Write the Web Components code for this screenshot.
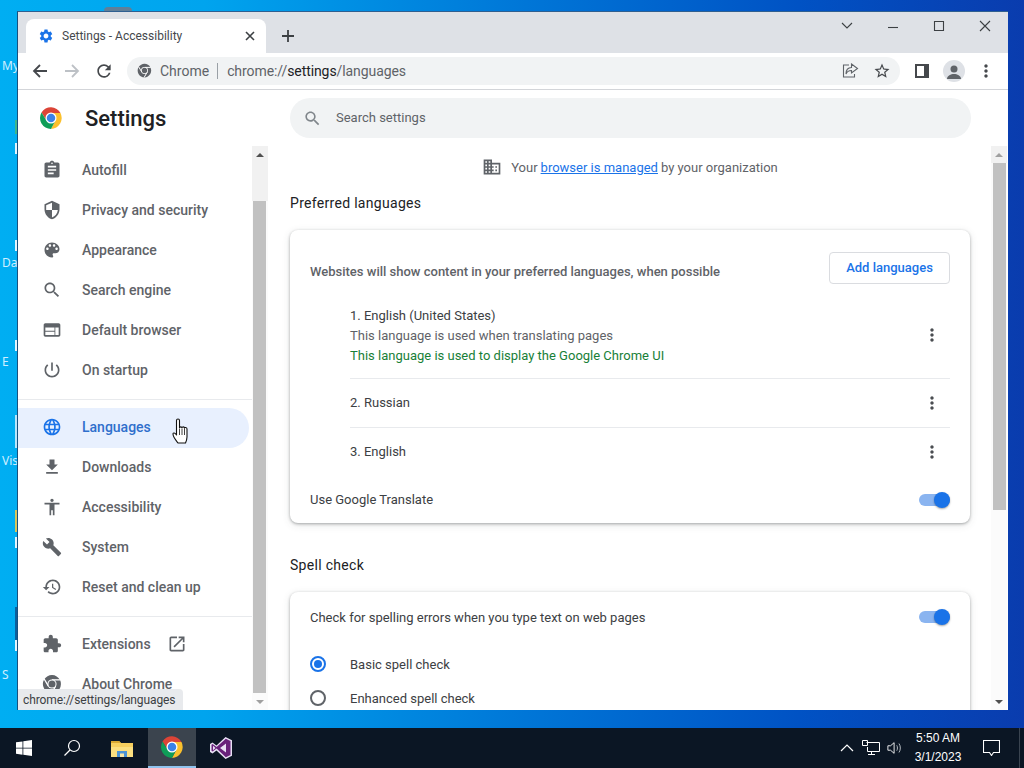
<!DOCTYPE html>
<html>
<head>
<meta charset="utf-8">
<title>Settings - Accessibility</title>
<style>
    html, body { margin: 0; height: 100%; overflow: hidden; }
    body { font-family: Roboto, "Liberation Sans", sans-serif; }
</style>
</head>
<body>
<win-desktop>
    <chrome-window>
        <tab-strip slot="top"></tab-strip>
        <tool-bar slot="top"></tool-bar>
        <settings-header slot="top"></settings-header>
        <settings-nav slot="side"></settings-nav>
        <settings-page slot="main"></settings-page>
    </chrome-window>
</win-desktop>

<script>
const ICONS = {
    assignment: 'M19 3h-4.18C14.4 1.84 13.3 1 12 1c-1.3 0-2.4.84-2.82 2H5c-1.1 0-2 .9-2 2v14c0 1.1.9 2 2 2h14c1.1 0 2-.9 2-2V5c0-1.1-.9-2-2-2zm-7 0c.55 0 1 .45 1 1s-.45 1-1 1-1-.45-1-1 .45-1 1-1zm2 14H7v-2h7v2zm3-4H7v-2h10v2zm0-4H7V7h10v2z',
    shield: 'M12 1L3 5v6c0 5.55 3.84 10.74 9 12 5.16-1.26 9-6.45 9-12V5l-9-4zm0 10.99h7c-.53 4.12-3.28 7.79-7 8.94V12H5V6.3l7-3.11v8.8z',
    palette: 'M12 3c-4.97 0-9 4.03-9 9s4.03 9 9 9c.83 0 1.5-.67 1.5-1.5 0-.39-.15-.74-.39-1.01-.23-.26-.38-.61-.38-.99 0-.83.67-1.5 1.5-1.5H16c2.76 0 5-2.24 5-5 0-4.42-4.03-8-9-8zm-5.5 9c-.83 0-1.5-.67-1.5-1.5S5.67 9 6.5 9 8 9.67 8 10.5 7.33 12 6.5 12zm3-4C8.67 8 8 7.33 8 6.5S8.67 5 9.5 5s1.5.67 1.5 1.5S10.33 8 9.5 8zm5 0c-.83 0-1.5-.67-1.5-1.5S13.67 5 14.5 5s1.5.67 1.5 1.5S15.33 8 14.5 8zm3 4c-.83 0-1.5-.67-1.5-1.5S16.67 9 17.5 9s1.5.67 1.5 1.5-.67 1.5-1.5 1.5z',
    search: 'M15.5 14h-.79l-.28-.27C15.41 12.59 16 11.11 16 9.5 16 5.91 13.09 3 9.5 3S3 5.91 3 9.5 5.91 16 9.5 16c1.61 0 3.09-.59 4.23-1.57l.27.28v.79l5 4.99L20.49 19l-4.99-5zm-6 0C7.01 14 5 11.99 5 9.5S7.01 5 9.5 5 14 7.01 14 9.5 11.99 14 9.5 14z',
    web: 'M20 4H4c-1.1 0-1.99.9-1.99 2L2 18c0 1.1.9 2 2 2h16c1.1 0 2-.9 2-2V6c0-1.1-.9-2-2-2zm-5 14H4v-4h11v4zm0-5H4V9h11v4zm5 5h-4V9h4v9z',
    power: 'M13 3h-2v10h2V3zm4.83 2.17l-1.42 1.42C17.99 7.86 19 9.81 19 12c0 3.87-3.13 7-7 7s-7-3.13-7-7c0-2.19 1.01-4.14 2.58-5.42L6.17 5.17C4.23 6.82 3 9.26 3 12c0 4.97 4.03 9 9 9s9-4.03 9-9c0-2.74-1.23-5.18-3.17-6.83z',
    language: 'M11.99 2C6.47 2 2 6.48 2 12s4.47 10 9.99 10C17.52 22 22 17.52 22 12S17.52 2 11.99 2zm6.93 6h-2.95c-.32-1.25-.78-2.45-1.38-3.56 1.84.63 3.37 1.91 4.33 3.56zM12 4.04c.83 1.2 1.48 2.53 1.91 3.96h-3.82c.43-1.43 1.08-2.76 1.91-3.96zM4.26 14C4.1 13.36 4 12.69 4 12s.1-1.36.26-2h3.38c-.08.66-.14 1.32-.14 2 0 .68.06 1.34.14 2H4.26zm.82 2h2.95c.32 1.25.78 2.45 1.38 3.56-1.84-.63-3.37-1.9-4.33-3.56zm2.95-8H5.08c.96-1.66 2.49-2.93 4.33-3.56C8.81 5.55 8.35 6.75 8.03 8zM12 19.96c-.83-1.2-1.48-2.53-1.91-3.96h3.82c-.43 1.43-1.08 2.76-1.91 3.96zM14.34 14H9.66c-.09-.66-.16-1.32-.16-2 0-.68.07-1.35.16-2h4.68c.09.65.16 1.32.16 2 0 .68-.07 1.34-.16 2zm.25 5.56c.6-1.11 1.06-2.31 1.38-3.56h2.95c-.96 1.65-2.49 2.93-4.33 3.56zM16.36 14c.08-.66.14-1.32.14-2 0-.68-.06-1.34-.14-2h3.38c.16.64.26 1.31.26 2s-.1 1.36-.26 2h-3.38z',
    download: 'M19 9h-4V3H9v6H5l7 7 7-7zM5 18v2h14v-2H5z',
    accessibility: 'M12 2c1.1 0 2 .9 2 2s-.9 2-2 2-2-.9-2-2 .9-2 2-2zm9 7h-6v13h-2v-6h-2v6H9V9H3V7h18v2z',
    build: 'M22.7 19l-9.1-9.1c.9-2.3.4-5-1.5-6.9-2-2-5-2.4-7.4-1.3L9 6 6 9 1.6 4.7C.4 7.1.9 10.1 2.9 12.1c1.9 1.9 4.6 2.4 6.9 1.5l9.1 9.1c.4.4 1 .4 1.4 0l2.3-2.3c.5-.4.5-1.1.1-1.4z',
    restore: 'M13 3c-4.97 0-9 4.03-9 9H1l3.89 3.89.07.14L9 12H6c0-3.87 3.13-7 7-7s7 3.13 7 7-3.13 7-7 7c-1.93 0-3.68-.79-4.94-2.06l-1.42 1.42C8.27 19.99 10.51 21 13 21c4.97 0 9-4.03 9-9s-4.03-9-9-9zm-1 5v5l4.28 2.54.72-1.21-3.5-2.08V8H12z',
    extension: 'M20.5 11H19V7c0-1.1-.9-2-2-2h-4V3.5C13 2.12 11.88 1 10.5 1S8 2.12 8 3.5V5H4c-1.1 0-1.99.9-1.99 2v3.8H3.5c1.49 0 2.7 1.21 2.7 2.7s-1.21 2.7-2.7 2.7H2V20c0 1.1.9 2 2 2h3.8v-1.5c0-1.49 1.21-2.7 2.7-2.7 1.49 0 2.7 1.21 2.7 2.7V22H17c1.1 0 2-.9 2-2v-4h1.5c1.38 0 2.5-1.12 2.5-2.5S21.88 11 20.5 11z',
    openNew: 'M19 19H5V5h7V3H5c-1.11 0-2 .9-2 2v14c0 1.1.89 2 2 2h14c1.1 0 2-.9 2-2v-7h-2v7zM14 3v2h3.59l-9.83 9.83 1.41 1.41L19 6.41V10h2V3h-7z',
    domain: 'M12 7V3H2v18h20V7H12zM6 19H4v-2h2v2zm0-4H4v-2h2v2zm0-4H4V9h2v2zm0-4H4V5h2v2zm4 12H8v-2h2v2zm0-4H8v-2h2v2zm0-4H8V9h2v2zm0-4H8V5h2v2zm10 12h-8v-2h2v-2h-2v-2h2v-2h-2V9h8v10zm-2-8h-2v2h2v-2zm0 4h-2v2h2v-2z',
    gear: 'M19.14 12.94c.04-.3.06-.61.06-.94 0-.32-.02-.64-.07-.94l2.03-1.58c.18-.14.23-.41.12-.61l-1.92-3.32c-.12-.22-.37-.29-.59-.22l-2.39.96c-.5-.38-1.03-.7-1.62-.94l-.36-2.54c-.04-.24-.24-.41-.48-.41h-3.84c-.24 0-.43.17-.47.41l-.36 2.54c-.59.24-1.13.57-1.62.94l-2.39-.96c-.22-.08-.47 0-.59.22L2.74 8.87c-.12.21-.08.47.12.61l2.03 1.58c-.05.3-.09.63-.09.94s.02.64.07.94l-2.03 1.58c-.18.14-.23.41-.12.61l1.92 3.32c.12.22.37.29.59.22l2.39-.96c.5.38 1.03.7 1.62.94l.36 2.54c.05.24.24.41.48.41h3.84c.24 0 .44-.17.47-.41l.36-2.54c.59-.24 1.13-.56 1.62-.94l2.39.96c.22.08.47 0 .59-.22l1.92-3.32c.12-.22.07-.47-.12-.61l-2.01-1.58zM12 15.6c-1.98 0-3.6-1.62-3.6-3.6s1.62-3.6 3.6-3.6 3.6 1.62 3.6 3.6-1.62 3.6-3.6 3.6z',
    dots: 'M12 8c1.1 0 2-.9 2-2s-.9-2-2-2-2 .9-2 2 .9 2 2 2zm0 2c-1.1 0-2 .9-2 2s.9 2 2 2 2-.9 2-2-.9-2-2-2zm0 6c-1.1 0-2 .9-2 2s.9 2 2 2 2-.9 2-2-.9-2-2-2z',
    reload: 'M17.65 6.35A7.958 7.958 0 0 0 12 4c-4.42 0-7.99 3.58-7.99 8s3.57 8 7.99 8c3.73 0 6.84-2.55 7.73-6h-2.08A5.99 5.99 0 0 1 12 18c-3.31 0-6-2.69-6-6s2.69-6 6-6c1.66 0 3.14.69 4.22 1.78L13 11h7V4l-2.35 2.35z',
    star: 'M22 9.24l-7.19-.62L12 2 9.19 8.63 2 9.24l5.46 4.73L5.82 21 12 17.27 18.18 21l-1.63-7.03L22 9.24zM12 15.4l-3.76 2.27 1-4.28-3.32-2.88 4.38-.38L12 6.1l1.71 4.04 4.38.38-3.32 2.88 1 4.28L12 15.4z'
};

function icon(name, size, color) {
    return `<svg width="${size}" height="${size}" viewBox="0 0 24 24" fill="${color}" style="display:block;flex:none"><path d="${ICONS[name]}"/></svg>`;
}

function chromeLogo(size, mono) {
    const cuts = mono
        ? '<path d="M24 14H44M15.300 29L5 11.500M32.700 29L22.500 46.500" stroke="#fff" stroke-width="3"/>'
        : '';
    return `<svg width="${size}" height="${size}" viewBox="0 0 48 48" style="display:block;flex:none">
        <path fill="${mono ? '#5f6368' : '#db4437'}" d="M5 13A22 22 0 0 1 43 14H24L15 29Z"/>
        <path fill="${mono ? '#5f6368' : '#fbc02d'}" d="M43 14A22 22 0 0 1 24 46L33 29L24 14Z"/>
        <path fill="${mono ? '#5f6368' : '#0f9d58'}" d="M24 46A22 22 0 0 1 5 13L15 29H33Z"/>
        ${cuts}
        <circle cx="24" cy="24" r="11" fill="#fff"/>
        <circle cx="24" cy="24" r="8.500" fill="${mono ? '#5f6368' : '#3b82e8'}"/>
    </svg>`;
}

class WinDesktop extends HTMLElement {
    constructor() {
        super();
        this.attachShadow({ mode: 'open' });
    }

    connectedCallback() {
        const labels = [['My', 59], ['Da', 256], ['E', 355], ['Vis', 454], ['S', 668]];
        const bits = [
            [120, 14, '#3fb58a'], [143, 11, '#e4f5fd'], [240, 11, '#e4f5fd'], [340, 11, '#e4f5fd'],
            [415, 33, '#b8e6fb'], [510, 22, '#d8c65a'], [537, 11, '#e4f5fd'], [607, 33, '#0c5f9c'], [640, 11, '#e4f5fd']
        ];
        this.shadowRoot.innerHTML = `
            <style>
                :host {
                    display: block;
                    position: relative;
                    width: 1024px;
                    height: 768px;
                    overflow: hidden;
                    background: linear-gradient(90deg, #00aef2 0, #00a4ee 20%, #0078d8 50%, #0052c4 78%, #0a3cae 100%);
                }
                .label {
                    position: absolute;
                    left: 2px;
                    color: #cfeeff;
                    font: 12px "Noto Sans", sans-serif;
                    line-height: 14px;
                }
                .bit {
                    position: absolute;
                    left: 15px;
                    width: 3px;
                }
                .head {
                    position: absolute;
                    left: 104px;
                    top: 7px;
                    width: 28px;
                    height: 4px;
                    border-radius: 8px 8px 0 0;
                    background: #5f7f99;
                }
                .win {
                    position: absolute;
                    left: 17px;
                    top: 11px;
                    width: 991px;
                    height: 699px;
                }
                task-bar {
                    position: absolute;
                    left: 0;
                    right: 0;
                    bottom: 0;
                }
                .hand {
                    position: absolute;
                    left: 171px;
                    top: 417px;
                }
            </style>
            ${labels.map(l => `<span class="label" style="top:${l[1]}px">${l[0]}</span>`).join('')}
            ${bits.map(b => `<i class="bit" style="top:${b[0]}px;height:${b[1]}px;background:${b[2]}"></i>`).join('')}
            <i class="head"></i>
            <div class="win"><slot></slot></div>
            <task-bar></task-bar>
            <svg class="hand" width="22" height="28" viewBox="0 0 22 28">
                <path d="M7 26c-1.500-2-5-6-5-9 0-1.500 2-1.500 3.500 1V3.500c0-2 3-2 3 0V11c0-1.500 2.500-1.500 2.500 0 0-1.500 2.500-1.500 2.500 .2 0-1.200 2.500-1 2.500 .8V20c0 2-.7 4-1.500 6z" fill="#fff" stroke="#111" stroke-width="1.100" stroke-linejoin="round"/>
                <path d="M8.500 12v6M11 12v6M13.500 12v6" stroke="#111" stroke-width=".8"/>
            </svg>
        `;
    }
}

class ChromeWindow extends HTMLElement {
    constructor() {
        super();
        this.attachShadow({ mode: 'open' });
    }

    connectedCallback() {
        this.shadowRoot.innerHTML = `
            <style>
                :host {
                    display: flex;
                    flex-direction: column;
                    position: relative;
                    height: 100%;
                    box-sizing: border-box;
                    border-left: 1px solid #17507f;
                    border-top: 1px solid #2f5f90;
                    background: #fff;
                    overflow: hidden;
                }
                .body {
                    flex: 1;
                    min-height: 0;
                    display: flex;
                }
                .bubble {
                    position: absolute;
                    left: 0;
                    bottom: 0;
                    height: 21px;
                    padding: 0 8px 0 5px;
                    line-height: 22px;
                    font-size: 12px;
                    letter-spacing: -.1px;
                    color: #3c4043;
                    background: #e8eaed;
                    border-top-right-radius: 4px;
                }
            </style>
            <slot name="top"></slot>
            <div class="body">
                <slot name="side"></slot>
                <slot name="main"></slot>
            </div>
            <div class="bubble">chrome://settings/languages</div>
        `;
    }
}

class TabStrip extends HTMLElement {
    constructor() {
        super();
        this.attachShadow({ mode: 'open' });
    }

    connectedCallback() {
        const stroke = 'fill="none" stroke="#3c4043" stroke-width="1.100"';
        this.shadowRoot.innerHTML = `
            <style>
                :host {
                    display: flex;
                    align-items: flex-end;
                    height: 41px;
                    padding-left: 8px;
                    background: #dee1e6;
                }
                .tab {
                    display: flex;
                    align-items: center;
                    width: 240px;
                    height: 34px;
                    box-sizing: border-box;
                    padding: 0 8px 0 12px;
                    background: #fff;
                    border-radius: 8px 8px 0 0;
                    color: #45484c;
                    font-size: 12px;
                }
                .title { flex: 1; margin-left: 8px; }
                .close { display: block; }
                .plus { margin: 0 0 9px 14px; display: block; }
                .spacer { flex: 1; }
                .ctl {
                    display: flex;
                    align-items: center;
                    justify-content: center;
                    width: 46px;
                    height: 27px;
                }
                .controls { display: flex; align-self: flex-start; }
            </style>
            <div class="tab">
                ${icon('gear', 16, '#1a73e8')}
                <span class="title">Settings - Accessibility</span>
                <svg class="close" width="16" height="16" viewBox="0 0 16 16"><path d="M4 4l8 8M12 4l-8 8" stroke="#3c4043" stroke-width="1.600"/></svg>
            </div>
            <svg class="plus" width="16" height="16" viewBox="0 0 16 16"><path d="M8 2v12M2 8h12" stroke="#3c4043" stroke-width="1.800"/></svg>
            <div class="spacer"></div>
            <div class="controls">
                <div class="ctl"><svg width="12" height="8" viewBox="0 0 12 8"><path d="M1 1l5 5 5-5" ${stroke}/></svg></div>
                <div class="ctl"><svg width="12" height="12" viewBox="0 0 12 12"><path d="M1 7.500h10" ${stroke}/></svg></div>
                <div class="ctl"><svg width="12" height="12" viewBox="0 0 12 12"><path d="M1.500 1.500h9v9h-9z" ${stroke}/></svg></div>
                <div class="ctl"><svg width="12" height="12" viewBox="0 0 12 12"><path d="M1 1l10 10M11 1L1 11" ${stroke}/></svg></div>
            </div>
        `;
    }
}

class ToolBar extends HTMLElement {
    constructor() {
        super();
        this.attachShadow({ mode: 'open' });
    }

    connectedCallback() {
        this.shadowRoot.innerHTML = `
            <style>
                :host {
                    display: flex;
                    align-items: center;
                    height: 37px;
                    box-sizing: border-box;
                    padding: 0 6px 1px 6px;
                    background: #fff;
                    border-bottom: 1px solid #d3d5d9;
                }
                .btn {
                    display: flex;
                    align-items: center;
                    justify-content: center;
                    width: 32px;
                    height: 28px;
                    flex: none;
                }
                .omni {
                    display: flex;
                    align-items: center;
                    flex: 1;
                    height: 28px;
                    margin: 0 6px 0 7px;
                    padding: 0 2px 0 10px;
                    background: #f1f3f4;
                    border-radius: 14px;
                    font-size: 14px;
                    color: #5f6368;
                }
                .host { margin-left: 8px; }
                .sep { width: 1px; height: 16px; background: #9aa0a6; margin: 0 9px 0 8px; }
                .url { flex: 1; letter-spacing: -.08px; }
                .url b { font-weight: 400; color: #202124; }
                .avatar {
                    display: flex;
                    align-items: flex-end;
                    justify-content: center;
                    width: 22px;
                    height: 22px;
                    border-radius: 50%;
                    background: #dee1e6;
                    overflow: hidden;
                }
            </style>
            <div class="btn"><svg width="18" height="18" viewBox="0 0 18 18"><path d="M16 9H3M9 3L3 9l6 6" fill="none" stroke="#45484c" stroke-width="1.800"/></svg></div>
            <div class="btn"><svg width="18" height="18" viewBox="0 0 18 18"><path d="M2 9h13M9 3l6 6-6 6" fill="none" stroke="#bdc1c6" stroke-width="1.800"/></svg></div>
            <div class="btn">${icon('reload', 20, '#45484c')}</div>
            <div class="omni">
                ${chromeLogo(15, true)}
                <span class="host">Chrome</span>
                <i class="sep"></i>
                <span class="url">chrome://<b>settings</b>/languages</span>
                <div class="btn"><svg width="18" height="18" viewBox="0 0 18 18" fill="none" stroke="#5f6368" stroke-width="1.100"><path d="M8 3H2.500v12h11v-3"/><path d="M10.500 2l6 4.500-6 4.500V8.500C8 8.500 6 9.500 5 12c0-4 2-6.500 5.500-6.500z"/></svg></div>
                <div class="btn">${icon('star', 18, '#45484c')}</div>
            </div>
            <div class="btn"><svg width="14" height="14" viewBox="0 0 14 14" style="display:block"><path d="M0 0h14v14H0z" fill="#45484c"/><path d="M2 2h7v10H2z" fill="#fff"/></svg></div>
            <div class="btn"><div class="avatar"><svg width="16" height="16" viewBox="0 0 16 16" fill="#5f6368" style="margin-bottom:2px"><circle cx="8" cy="5" r="3.500"/><path d="M1 15c0-3.500 4-5 7-5s7 1.500 7 5z"/></svg></div></div>
            <div class="btn">${icon('dots', 20, '#45484c')}</div>
        `;
    }
}

class SettingsHeader extends HTMLElement {
    constructor() {
        super();
        this.attachShadow({ mode: 'open' });
    }

    connectedCallback() {
        this.shadowRoot.innerHTML = `
            <style>
                :host {
                    display: flex;
                    align-items: center;
                    height: 56px;
                    box-sizing: border-box;
                    padding: 0 37px 0 21px;
                    background: #fff;
                }
                .title {
                    width: 205px;
                    margin-left: 22px;
                    font-size: 22px;
                    font-weight: 500;
                    color: #202124;
                }
                .search {
                    display: flex;
                    align-items: center;
                    flex: 1;
                    height: 40px;
                    padding-left: 13px;
                    background: #f1f3f4;
                    border-radius: 20px;
                    font-size: 13px;
                    color: #5f6368;
                }
                .search span { margin: 0 0 1px 14px; }
            </style>
            ${chromeLogo(24)}
            <div class="title">Settings</div>
            <div class="search">${icon('search', 19, '#80868b')}<span>Search settings</span></div>
        `;
    }
}

class NavItem extends HTMLElement {
    constructor() {
        super();
        this.attachShadow({ mode: 'open' });
    }

    connectedCallback() {
        const name = this.getAttribute('icon');
        const color = this.hasAttribute('active') ? '#1a73e8' : '#5f6368';
        this.shadowRoot.innerHTML = `
            <style>
                :host {
                    display: flex;
                    align-items: center;
                    height: 40px;
                    box-sizing: border-box;
                    padding-left: 24px;
                    font-size: 14px;
                    font-weight: 500;
                    color: #5f6368;
                    flex: none;
                }
                :host([active]) {
                    color: #2f6fcc;
                    background: #e8f0fe;
                    border-radius: 0 20px 20px 0;
                    margin: 1px 3px -1px 0;
                    padding-bottom: 2px;
                }
                .label { margin-left: 20px; }
                ::slotted(*) { margin-left: 16px; }
            </style>
            ${name === 'chrome' ? chromeLogo(20, true) : icon(name, 20, color)}
            <span class="label">${this.getAttribute('label')}</span>
            <slot></slot>
        `;
    }
}

class SettingsNav extends HTMLElement {
    constructor() {
        super();
        this.attachShadow({ mode: 'open' });
    }

    connectedCallback() {
        this.shadowRoot.innerHTML = `
            <style>
                :host {
                    display: flex;
                    width: 250px;
                    flex: none;
                    overflow: hidden;
                }
                nav {
                    flex: 1;
                    min-width: 0;
                    display: flex;
                    flex-direction: column;
                    padding-top: 4px;
                    overflow: hidden;
                }
                hr {
                    flex: none;
                    width: 100%;
                    height: 1px;
                    margin: 9px 0 7px;
                    border: 0;
                    background: #e8eaed;
                }
                .bar {
                    flex: none;
                    width: 16px;
                    display: flex;
                    flex-direction: column;
                    background: #fbfbfb;
                }
                .btn {
                    height: 17px;
                    flex: none;
                    background: #f1f1f1;
                    display: flex;
                    align-items: center;
                    justify-content: center;
                }
                .gap { height: 38px; background: #f1f1f1; flex: none; }
                .thumb { height: 492px; flex: none; background: #c1c1c1; margin: 0 2px 0 1px; }
                .down { margin-top: auto; background: transparent; }
                .tri { border-left: 4px solid transparent; border-right: 4px solid transparent; }
                .up { border-bottom: 4px solid #505050; }
                .dn { border-top: 4px solid #a0a0a0; }
            </style>
            <nav>
                <nav-item icon="assignment" label="Autofill"></nav-item>
                <nav-item icon="shield" label="Privacy and security"></nav-item>
                <nav-item icon="palette" label="Appearance"></nav-item>
                <nav-item icon="search" label="Search engine"></nav-item>
                <nav-item icon="web" label="Default browser"></nav-item>
                <nav-item icon="power" label="On startup"></nav-item>
                <hr>
                <nav-item icon="language" label="Languages" active></nav-item>
                <nav-item icon="download" label="Downloads"></nav-item>
                <nav-item icon="accessibility" label="Accessibility"></nav-item>
                <nav-item icon="build" label="System"></nav-item>
                <nav-item icon="restore" label="Reset and clean up"></nav-item>
                <hr>
                <nav-item icon="extension" label="Extensions">${icon('openNew', 20, '#5f6368')}</nav-item>
                <nav-item icon="chrome" label="About Chrome"></nav-item>
            </nav>
            <div class="bar">
                <div class="btn"><i class="tri up"></i></div>
                <div class="gap"></div>
                <div class="thumb"></div>
                <div class="btn down"><i class="tri dn"></i></div>
            </div>
        `;
    }
}

class SettingsCard extends HTMLElement {
    constructor() {
        super();
        this.attachShadow({ mode: 'open' });
    }

    connectedCallback() {
        this.shadowRoot.innerHTML = `
            <style>
                :host {
                    display: block;
                    background: #fff;
                    border-radius: 8px;
                    box-shadow: 0 1px 3px rgba(60, 64, 67, .42), 0 2px 8px rgba(60, 64, 67, .12);
                }
            </style>
            <slot></slot>
        `;
    }
}

class LangRow extends HTMLElement {
    constructor() {
        super();
        this.attachShadow({ mode: 'open' });
    }

    connectedCallback() {
        this.shadowRoot.innerHTML = `
            <style>
                :host {
                    display: flex;
                    align-items: center;
                    min-height: 48px;
                    margin: 0 20px 0 60px;
                    font-size: 13px;
                    color: #3c4043;
                }
                :host([divided]) { border-top: 1px solid #e8eaed; }
                .text { flex: 1; line-height: 20px; }
                svg { display: block; margin-right: 8px; }
            </style>
            <div class="text"><slot></slot></div>
            ${icon('dots', 20, '#4a4d51')}
        `;
    }
}

class ToggleSwitch extends HTMLElement {
    constructor() {
        super();
        this.attachShadow({ mode: 'open' });
    }

    connectedCallback() {
        this.shadowRoot.innerHTML = `
            <style>
                :host {
                    display: flex;
                    align-items: center;
                    position: relative;
                    width: 31px;
                    height: 16px;
                    flex: none;
                }
                .track {
                    width: 100%;
                    height: 12px;
                    border-radius: 6px;
                    background: #8ab4f0;
                }
                .knob {
                    position: absolute;
                    right: 0;
                    top: 0;
                    width: 16px;
                    height: 16px;
                    border-radius: 50%;
                    background: #1a73e8;
                    box-shadow: 0 1px 2px rgba(0, 0, 0, .35);
                }
            </style>
            <div class="track"></div>
            <div class="knob"></div>
        `;
    }
}

class RadioRow extends HTMLElement {
    constructor() {
        super();
        this.attachShadow({ mode: 'open' });
    }

    connectedCallback() {
        const on = this.hasAttribute('checked');
        this.shadowRoot.innerHTML = `
            <style>
                :host {
                    display: flex;
                    align-items: center;
                    height: 34px;
                    padding-left: 20px;
                    font-size: 13px;
                    color: #3c4043;
                }
                .dot {
                    display: flex;
                    align-items: center;
                    justify-content: center;
                    width: 16px;
                    height: 16px;
                    box-sizing: border-box;
                    margin-right: 24px;
                    border-radius: 50%;
                    border: 2px solid ${on ? '#1a73e8' : '#5f6368'};
                }
                .dot i { width: 8px; height: 8px; border-radius: 50%; background: #1a73e8; }
            </style>
            <div class="dot">${on ? '<i></i>' : ''}</div>
            <slot></slot>
        `;
    }
}

class SettingsPage extends HTMLElement {
    constructor() {
        super();
        this.attachShadow({ mode: 'open' });
    }

    connectedCallback() {
        this.shadowRoot.innerHTML = `
            <style>
                :host {
                    display: flex;
                    flex: 1;
                    min-width: 0;
                    overflow: hidden;
                }
                .col {
                    flex: 1;
                    min-width: 0;
                    padding: 0 21px 0 22px;
                    overflow: hidden;
                }
                .managed {
                    display: flex;
                    align-items: center;
                    justify-content: center;
                    height: 42px;
                    font-size: 13px;
                    color: #5f6368;
                }
                .managed svg { margin-right: 9px; }
                .managed a { color: #1a73e8; text-decoration: underline; margin: 0 3px; }
                h2 {
                    margin: 0 0 12px;
                    height: 30px;
                    line-height: 30px;
                    font-size: 14px;
                    font-weight: 400;
                    letter-spacing: .3px;
                    color: #202124;
                }
                settings-card + h2 { margin-top: 27px; }
                .head {
                    display: flex;
                    align-items: center;
                    justify-content: space-between;
                    padding: 22px 20px 0;
                    margin-bottom: 8px;
                }
                .head span { font-size: 13px; font-weight: 500; color: #5f6368; padding-top: 6px; }
                button {
                    height: 32px;
                    width: 121px;
                    padding: 0 0 1px;
                    background: #fff;
                    border: 1px solid #dadce0;
                    border-radius: 4px;
                    font: 500 13px Roboto, sans-serif;
                    color: #1a73e8;
                }
                .sub { color: #5f6368; }
                .ok { color: #188038; }
                .first { padding: 14px 0 12px; }
                .row {
                    display: flex;
                    align-items: center;
                    justify-content: space-between;
                    padding: 0 20px;
                    font-size: 13px;
                    color: #3c4043;
                }
                .bar {
                    flex: none;
                    width: 16px;
                    margin-right: 1px;
                    display: flex;
                    flex-direction: column;
                    background: #fbfbfb;
                }
                .btn {
                    height: 17px;
                    flex: none;
                    background: #f1f1f1;
                    display: flex;
                    align-items: center;
                    justify-content: center;
                }
                .thumb { height: 347px; flex: none; background: #c1c1c1; margin: 0 1px 0 2px; }
                .down { margin-top: auto; background: transparent; }
                .tri { border-left: 4px solid transparent; border-right: 4px solid transparent; }
                .up { border-bottom: 4px solid #a0a0a0; }
                .dn { border-top: 4px solid #505050; }
            </style>
            <div class="col">
                <div class="managed">
                    ${icon('domain', 20, '#5f6368')}
                    <span>Your<a>browser is managed</a>by your organization</span>
                </div>
                <h2>Preferred languages</h2>
                <settings-card>
                    <div class="head">
                        <span>Websites will show content in your preferred languages, when possible</span>
                        <button>Add languages</button>
                    </div>
                    <lang-row>
                        <div class="first">
                            <div>1. English (United States)</div>
                            <div class="sub">This language is used when translating pages</div>
                            <div class="ok">This language is used to display the Google Chrome UI</div>
                        </div>
                    </lang-row>
                    <lang-row divided>2. Russian</lang-row>
                    <lang-row divided>3. English</lang-row>
                    <div class="row" style="height:47px">Use Google Translate <toggle-switch></toggle-switch></div>
                </settings-card>
                <h2>Spell check</h2>
                <settings-card style="height:200px">
                    <div class="row" style="height:50px">Check for spelling errors when you type text on web pages <toggle-switch></toggle-switch></div>
                    <div style="height:5px"></div>
                    <radio-row checked>Basic spell check</radio-row>
                    <radio-row>Enhanced spell check</radio-row>
                </settings-card>
            </div>
            <div class="bar">
                <div class="btn"><i class="tri up"></i></div>
                <div class="thumb"></div>
                <div class="btn down"><i class="tri dn"></i></div>
            </div>
        `;
    }
}

class TaskBar extends HTMLElement {
    constructor() {
        super();
        this.attachShadow({ mode: 'open' });
    }

    connectedCallback() {
        this.shadowRoot.innerHTML = `
            <style>
                :host {
                    display: flex;
                    align-items: center;
                    height: 40px;
                    background: #0b1624;
                    color: #fff;
                    font: 12px "Liberation Sans", sans-serif;
                }
                .slot {
                    display: flex;
                    align-items: center;
                    justify-content: center;
                    width: 48px;
                    height: 40px;
                    flex: none;
                    box-sizing: border-box;
                }
                .active { background: #3b444e; border-bottom: 2px solid #8fc3ee; margin-left: 2px; }
                .spacer { flex: 1; }
                .tray { display: flex; align-items: center; justify-content: center; width: 24px; height: 40px; flex: none; }
                .clock { width: 70px; text-align: center; line-height: 19px; flex: none; }
                .notify { width: 36px; }
                .edge { width: 1px; height: 40px; background: #3a4450; margin: 0 4px 0 10px; flex: none; }
            </style>
            <div class="slot"><svg width="16" height="16" viewBox="0 0 16 16" fill="#fff"><path d="M0 2.300l6.500-.9v6.300H0zM7.300 1.300L16 0v7.700H7.300zM0 8.400h6.500v6.300L0 13.800zM7.300 8.400H16V16l-8.700-1.200z"/></svg></div>
            <div class="slot"><svg width="18" height="18" viewBox="0 0 18 18" fill="none" stroke="#fff" stroke-width="1.200"><circle cx="11" cy="7" r="5.500"/><path d="M7 11l-5.500 5.500"/></svg></div>
            <div class="slot" style="margin-left:2px"><svg width="24" height="20" viewBox="0 0 24 20"><path d="M1 3h8l2 2h12v14H1z" fill="#f6cf5f"/><path d="M1 3h8l2 2H1z" fill="#d9a832"/><path d="M1 9h22v10H1z" fill="#fbdf80"/><path d="M7 13h10v6H7z" fill="#4c93d4"/><path d="M10 15.500h4V19h-4z" fill="#f6e6a8"/></svg></div>
            <div class="slot active">${chromeLogo(24)}</div>
            <div class="slot" style="margin-left:1px"><svg width="24" height="24" viewBox="0 0 24 24"><path d="M16.500 1L23 4.200v15.600L16.500 23 7.500 14.500 3.500 17.500 1 16V8l2.500-1.500 4 3z" fill="#e8e0f4"/><path d="M16.800 2.800L21.500 5v14l-4.700 2.200-9.200-8.700-4 3-1.100-.7V8.800l1.100-.7 4 3z" fill="#68217a"/><path d="M17 7.500v9L11 12zM4 9.700L6.500 12 4 14.300z" fill="#e8e0f4"/></svg></div>
            <div class="spacer"></div>
            <div class="tray"><svg width="14" height="8" viewBox="0 0 14 8" fill="none" stroke="#fff" stroke-width="1.200"><path d="M1 7l6-6 6 6"/></svg></div>
            <div class="tray"><svg width="18" height="18" viewBox="0 0 18 18" fill="none" stroke="#fff"><path d="M4.500 3.500h13v9h-12v-4.500M9.500 12.500v3M6 15.500h7"/><path d="M.5 1.500h5v5h-5z"/></svg></div>
            <div class="tray" style="width:20px;padding-left:3px;box-sizing:border-box"><svg width="16" height="16" viewBox="0 0 18 16" fill="none" stroke="#fff"><path d="M1 5.500h3l4-3.500v12L4 10.500H1z"/><path d="M11 5c1 1.500 1 4.500 0 6M13.500 3c2 3 2 7 0 10" stroke="#c7ccd1"/></svg></div>
            <div class="clock"><div>5:50 AM</div><div>3/1/2023</div></div>
            <div class="slot notify"><svg width="17" height="16" viewBox="0 0 17 16" fill="none" stroke="#fff" stroke-width="1.100"><path d="M.5.500h16v12h-6l-2 3-2-3h-6z"/></svg></div>
            <div class="edge"></div>
        `;
    }
}

customElements.define('nav-item', NavItem);
customElements.define('settings-nav', SettingsNav);
customElements.define('settings-card', SettingsCard);
customElements.define('lang-row', LangRow);
customElements.define('toggle-switch', ToggleSwitch);
customElements.define('radio-row', RadioRow);
customElements.define('settings-page', SettingsPage);
customElements.define('settings-header', SettingsHeader);
customElements.define('tab-strip', TabStrip);
customElements.define('tool-bar', ToolBar);
customElements.define('chrome-window', ChromeWindow);
customElements.define('task-bar', TaskBar);
customElements.define('win-desktop', WinDesktop);
</script>
</body>
</html>
